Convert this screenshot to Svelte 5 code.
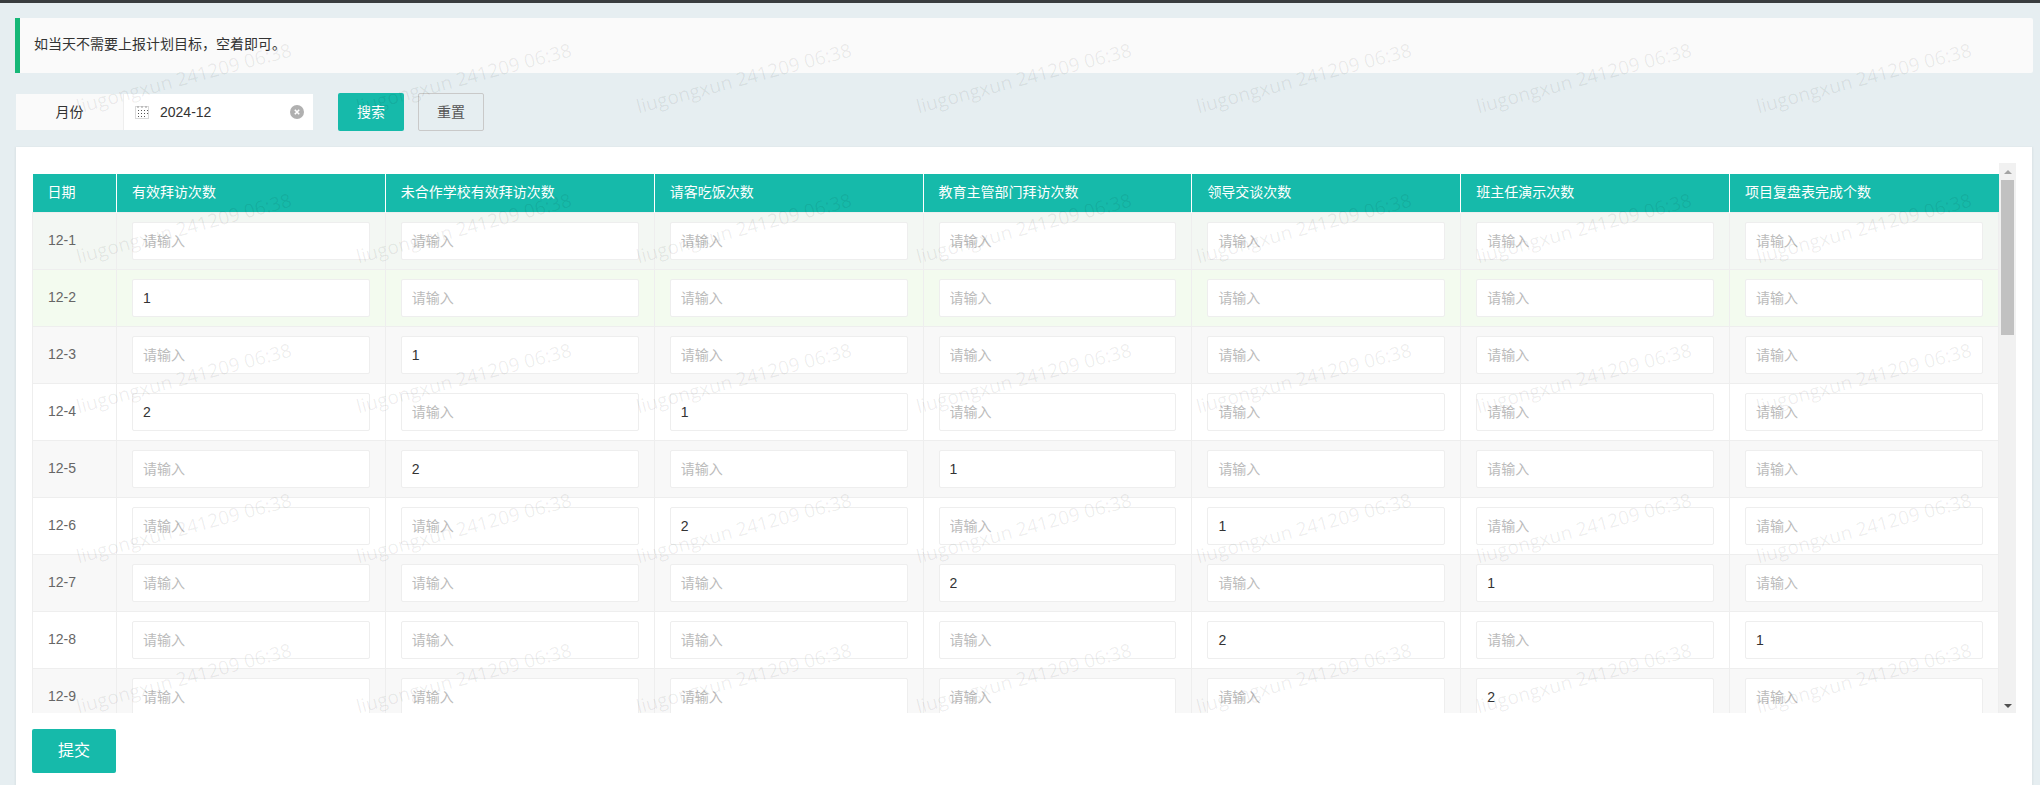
<script>
  const columns = [
    '有效拜访次数',
    '未合作学校有效拜访次数',
    '请客吃饭次数',
    '教育主管部门拜访次数',
    '领导交谈次数',
    '班主任演示次数',
    '项目复盘表完成个数'
  ];

  // column index -> value, per day
  const filled = {
    2: { 0: '1' },
    3: { 1: '1' },
    4: { 0: '2', 2: '1' },
    5: { 1: '2', 3: '1' },
    6: { 2: '2', 4: '1' },
    7: { 3: '2', 5: '1' },
    8: { 4: '2', 6: '1' },
    9: { 5: '2' }
  };

  const days = Array.from({ length: 9 }, (_, i) => i + 1);
  const marks = Array.from({ length: 35 }, (_, i) => i);

  function rowClass(day) {
    if (day === 1) return 'first';
    if (day === 2) return 'hover';
    return day % 2 ? 'odd' : '';
  }
</script>

<div class="page">
  <div class="topbar"></div>

  <div class="quote">如当天不需要上报计划目标，空着即可。</div>

  <form class="search" on:submit|preventDefault>
    <div class="field">
      <span class="field-label">月份</span>
      <div class="field-input">
        <svg class="calendar" viewBox="0 0 14 13" width="14" height="13" aria-hidden="true">
          <rect x="0.5" y="0.5" width="13" height="12" fill="none" stroke="#d9d9d9" />
          <path d="M3 0v2M7 0v2M11 0v2" stroke="#999" />
          <path d="M3 4h1v1H3zM6 4h1v1H6zM9 4h1v1H9zM12 4h1v1h-1zM3 7h1v1H3zM6 7h1v1H6zM9 7h1v1H9zM12 7h1v1h-1zM3 10h1v1H3zM6 10h1v1H6zM9 10h1v1H9z" fill="#555" />
        </svg>
        <input class="month" type="text" value="2024-12" />
        <svg class="clear" viewBox="0 0 14 14" width="14" height="14" aria-hidden="true">
          <circle cx="7" cy="7" r="7" fill="#b0b0b0" />
          <path d="M4.8 4.8l4.4 4.4M9.2 4.8l-4.4 4.4" stroke="#fff" stroke-width="1.6" />
        </svg>
      </div>
    </div>
    <button class="btn primary" type="submit">搜索</button>
    <button class="btn plain" type="button">重置</button>
  </form>

  <div class="card">
    <div class="scroller">
      <div class="table-box">
        <table>
          <colgroup>
            <col class="date-col" />
            {#each columns as _}
              <col />
            {/each}
          </colgroup>
          <thead>
            <tr>
              <th>日期</th>
              {#each columns as name}
                <th>{name}</th>
              {/each}
            </tr>
          </thead>
          <tbody>
            {#each days as day}
              <tr class={rowClass(day)}>
                <td>12-{day}</td>
                {#each columns as _, c}
                  <td><input type="text" placeholder="请输入" value={filled[day]?.[c] ?? ''} /></td>
                {/each}
              </tr>
            {/each}
          </tbody>
        </table>
      </div>
      <div class="scrollbar">
        <span class="arrow up"></span>
        <span class="thumb"></span>
        <span class="arrow down"></span>
      </div>
    </div>
    <button class="btn primary submit" type="button">提交</button>
  </div>

  <div class="watermark" aria-hidden="true">
    {#each marks as m (m)}
      <div class="mark"><span>liugongxun 241209 06:38</span></div>
    {/each}
  </div>
</div>

<style>
  :global(body) {
    margin: 0;
    overflow: hidden;
    background: #e6eef1;
  }

  .page {
    position: relative;
    display: flex;
    flex-direction: column;
    height: 785px;
    overflow: hidden;
    font: 14px/1.5 "Liberation Sans", "Noto Sans CJK SC", sans-serif;
    color: #333;
  }

  .topbar {
    height: 3px;
    background: #393d3f;
  }

  .quote {
    box-sizing: border-box;
    height: 55px;
    margin: 15px 7px 0 15px;
    padding: 0 15px 0 14px;
    border-left: 5px solid #16b777;
    border-radius: 0 2px 2px 0;
    background: #fafafa;
    line-height: 53px;
  }

  .search {
    display: flex;
    align-items: center;
    height: 38px;
    margin: 20px 0 16px 16px;
  }

  .field {
    display: flex;
    width: 297px;
    height: 36px;
    margin-right: 25px;
    background: #fff;
  }

  .field-label {
    flex: none;
    box-sizing: border-box;
    width: 108px;
    border-right: 1px solid #eee;
    background: #fafafa;
    line-height: 36px;
    text-align: center;
  }

  .field-input {
    flex: 1;
    min-width: 0;
    display: flex;
    align-items: center;
    padding: 0 9px 0 11px;
  }

  .calendar {
    flex: none;
  }

  .month {
    flex: 1;
    min-width: 0;
    padding: 0 0 0 11px;
    border: 0;
    outline: 0;
    background: none;
    font: inherit;
    color: #333;
  }

  .clear {
    flex: none;
  }

  .btn {
    box-sizing: border-box;
    border-radius: 2px;
    font: inherit;
    text-align: center;
    cursor: pointer;
  }

  .search .btn {
    width: 66px;
    height: 38px;
    padding: 0;
  }

  .primary {
    border: 0;
    background: #16baaa;
    color: #fff;
  }

  .plain {
    margin-left: 14px;
    border: 1px solid #c9c9c9;
    background: transparent;
    color: #555;
  }

  .card {
    flex: 1;
    display: flex;
    flex-direction: column;
    min-height: 0;
    margin: 0 8px 0 16px;
    background: #fff;
    box-shadow: 0 1px 2px 1px rgba(0, 0, 0, 0.05);
  }

  .scroller {
    display: flex;
    height: 550px;
    margin: 16px 16px 0 16px;
    overflow: hidden;
  }

  .table-box {
    flex: 1;
    min-width: 0;
    padding-top: 11px;
  }

  table {
    width: 100%;
    table-layout: fixed;
    border-collapse: collapse;
  }

  .date-col {
    width: 84px;
  }

  th {
    box-sizing: border-box;
    height: 38px;
    padding: 0 15px;
    border-right: 1px solid #fff;
    background: #16baaa;
    font-weight: 400;
    text-align: left;
    color: #fff;
  }

  th:last-child {
    border-right: 0;
  }

  td {
    box-sizing: border-box;
    height: 57px;
    padding: 0 15px;
    border: 1px solid #eee;
    color: #666;
  }

  .first td {
    background: #f3f7f3;
  }

  .hover td {
    background: #f3fbef;
  }

  .odd td {
    background: #f8f8f8;
  }

  td input {
    display: block;
    box-sizing: border-box;
    width: 100%;
    height: 38px;
    padding: 0 10px;
    border: 1px solid #eee;
    border-radius: 2px;
    outline: 0;
    background: #fff;
    font: inherit;
    color: #333;
  }

  input::placeholder {
    color: #bbb;
    opacity: 1;
  }

  .scrollbar {
    flex: none;
    display: flex;
    flex-direction: column;
    align-items: center;
    width: 17px;
    background: #f1f1f1;
  }

  .arrow {
    flex: none;
    width: 0;
    height: 0;
    border: 4px solid transparent;
    border-top-width: 0;
    border-bottom-width: 0;
  }

  .arrow.up {
    margin: 7px 0 6px;
    border-bottom: 4px solid #a3a3a3;
  }

  .arrow.down {
    margin-top: auto;
    margin-bottom: 5px;
    border-top: 4px solid #505050;
  }

  .thumb {
    width: 13px;
    height: 155px;
    background: #c1c1c1;
  }

  .submit {
    align-self: flex-start;
    width: 84px;
    height: 44px;
    margin: 16px 0 0 16px;
    padding: 0;
    font-size: 16px;
  }

  .watermark {
    position: absolute;
    inset: 0;
    display: grid;
    grid-template-columns: repeat(7, 280px);
    grid-auto-rows: 150px;
    padding: 3px 0 0 44px;
    pointer-events: none;
  }

  .mark {
    display: flex;
    align-items: center;
    justify-content: center;
  }

  .mark span {
    transform: rotate(-15deg);
    font: 19px "Open Sans", sans-serif;
    white-space: nowrap;
    color: rgba(0, 0, 0, 0.07);
  }
</style>
